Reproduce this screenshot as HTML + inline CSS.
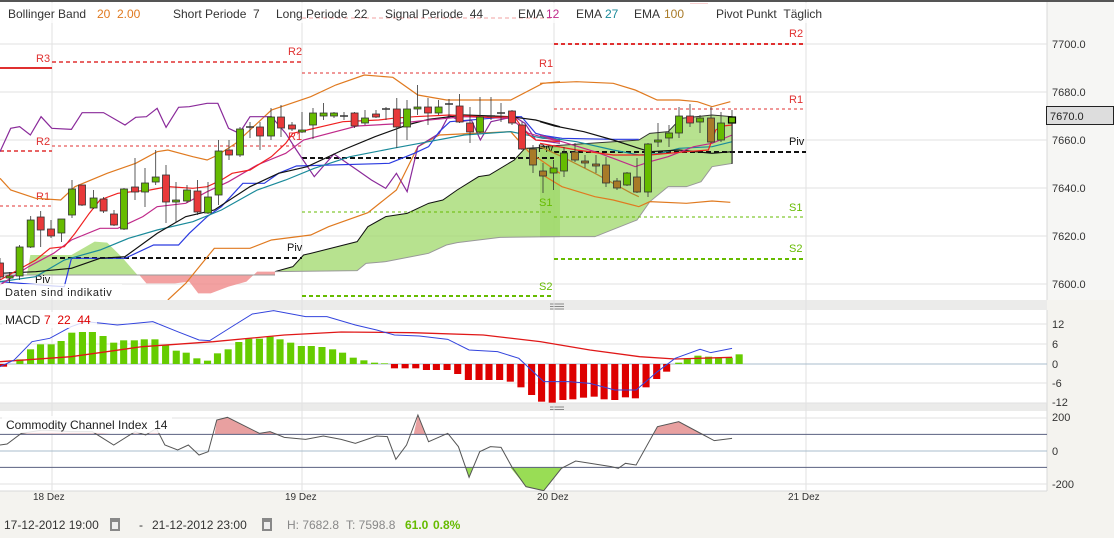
<!DOCTYPE html>
<html><head><meta charset="utf-8"><style>
html,body{margin:0;padding:0;background:#f4f3ef;}
body{width:1114px;height:538px;overflow:hidden;position:relative;font-family:"Liberation Sans",sans-serif;}
svg{position:absolute;left:0;top:0;}
text{font-family:"Liberation Sans",sans-serif;}
</style></head><body>
<svg width="1114" height="538" viewBox="0 0 1114 538">
<defs>
<clipPath id="mc"><rect x="0" y="3" width="1047" height="297"/></clipPath>
<clipPath id="mac"><rect x="0" y="310" width="1047" height="94"/></clipPath>
<clipPath id="cc"><rect x="0" y="410" width="1047" height="81"/></clipPath>
</defs>
<rect x="0" y="0" width="1114" height="538" fill="#f4f3ef"/>
<rect x="0" y="2" width="1047" height="298" fill="#fff"/>
<rect x="1047" y="2" width="67" height="298" fill="#f6f6f4"/>
<line x1="1047" y1="2" x2="1047" y2="300" stroke="#d8d8d8"/>
<rect x="0" y="0" width="1114" height="2" fill="#555"/>
<rect x="0" y="300" width="1047" height="10" fill="#ebebea"/>
<g stroke="#888" stroke-width="1"><line x1="550" y1="304" x2="564" y2="304"/><line x1="550" y1="306.5" x2="564" y2="306.5"/><line x1="550" y1="309" x2="564" y2="309"/></g>
<rect x="0" y="310" width="1047" height="93" fill="#fff"/>
<rect x="0" y="403" width="1047" height="8" fill="#ebebea"/>
<g stroke="#888" stroke-width="1"><line x1="550" y1="407" x2="564" y2="407"/><line x1="550" y1="409.5" x2="564" y2="409.5"/><line x1="550" y1="412" x2="564" y2="412"/></g>
<rect x="0" y="411" width="1047" height="80" fill="#fff"/>
<line x1="1047" y1="310" x2="1047" y2="491" stroke="#d8d8d8"/>
<line x1="0" y1="491" x2="1047" y2="491" stroke="#d8d8d8"/>

<g stroke="#e2e2e2" stroke-width="1">
<line x1="0" y1="44" x2="1047" y2="44"/><line x1="0" y1="92" x2="1047" y2="92"/><line x1="0" y1="140" x2="1047" y2="140"/><line x1="0" y1="188" x2="1047" y2="188"/><line x1="0" y1="236" x2="1047" y2="236"/><line x1="0" y1="284" x2="1047" y2="284"/>
<line x1="52" y1="2" x2="52" y2="491"/><line x1="302" y1="2" x2="302" y2="491"/><line x1="554" y1="2" x2="554" y2="491"/><line x1="806" y1="2" x2="806" y2="491"/>
</g>

<g clip-path="url(#mc)">
<g transform="scale(0.35714,0.33333)">
<polygon points="75,825 85,765 200,765 265,725 300,728 340,770 385,825" fill="#9fd86a" fill-opacity="0.75"/>
<polygon points="390,825 410,850 490,850 530,845 555,880 590,880 640,860 690,845 720,815 770,815 770,825" fill="#f08a8a" fill-opacity="0.8"/>
<polygon points="770,815 820,800 850,765 870,760 1000,725 1030,680 1080,650 1140,640 1200,610 1240,600 1280,570 1340,530 1370,525 1440,480 1470,445 1568,440 1568,710 1400,712 1280,728 1250,735 1200,760 1080,785 1025,790 1000,812" fill="#9fd86a" fill-opacity="0.75"/>
<polyline points="0,825 770,825" fill="none" stroke="#999" vector-effect="non-scaling-stroke"/>
<polyline points="770,815 820,800 850,765 870,760 1000,725 1030,680 1080,650 1140,640 1200,610 1240,600 1280,570 1340,530 1370,525 1440,480 1470,445 1568,440" fill="none" stroke="#111" vector-effect="non-scaling-stroke"/>
<polyline points="770,815 1000,812 1025,790 1080,785 1200,760 1250,735 1280,728 1400,712 1568,710" fill="none" stroke="#999" vector-effect="non-scaling-stroke"/>
</g>
<g transform="translate(540,0) scale(0.36603,0.33333)">
<polygon points="0,440 270,420 300,400 350,395 385,355 470,345 525,350 525,490 470,500 440,545 400,560 350,560 300,605 265,660 150,710 0,710" fill="#9fd86a" fill-opacity="0.75"/>
<polyline points="0,440 270,420 300,400 350,395 385,355 470,345 525,350 525,490" fill="none" stroke="#333" vector-effect="non-scaling-stroke"/>
<polyline points="0,710 150,710 265,660 300,605 350,560 400,560 440,545 470,500 525,490" fill="none" stroke="#999" vector-effect="non-scaling-stroke"/>
</g>

<line x1="0" y1="68" x2="52" y2="68" stroke="#e03030" stroke-width="2"/>
<line x1="0" y1="151" x2="52" y2="151" stroke="#e03030" stroke-width="1.5" stroke-dasharray="4,3"/>
<line x1="0" y1="206" x2="52" y2="206" stroke="#e03030" stroke-width="1" stroke-dasharray="3,3"/>
<line x1="52" y1="62" x2="302" y2="62" stroke="#e03030" stroke-width="1.5" stroke-dasharray="4,3"/>
<line x1="52" y1="146" x2="302" y2="146" stroke="#e03030" stroke-width="1" stroke-dasharray="3,3"/>
<line x1="52" y1="258" x2="302" y2="258" stroke="#111" stroke-width="2" stroke-dasharray="5,3"/>
<line x1="302" y1="18" x2="554" y2="18" stroke="#e03030" stroke-width="1.5" stroke-dasharray="4,3"/>
<line x1="302" y1="73" x2="554" y2="73" stroke="#e03030" stroke-width="1" stroke-dasharray="3,3"/>
<line x1="302" y1="158" x2="554" y2="158" stroke="#111" stroke-width="2" stroke-dasharray="5,3"/>
<line x1="302" y1="212" x2="554" y2="212" stroke="#66bb00" stroke-width="1" stroke-dasharray="3,3"/>
<line x1="302" y1="296" x2="554" y2="296" stroke="#66bb00" stroke-width="2" stroke-dasharray="4,3"/>
<line x1="554" y1="44" x2="806" y2="44" stroke="#e03030" stroke-width="2" stroke-dasharray="4,3"/>
<line x1="554" y1="109" x2="806" y2="109" stroke="#e03030" stroke-width="1" stroke-dasharray="3,3"/>
<line x1="554" y1="152" x2="806" y2="152" stroke="#111" stroke-width="2" stroke-dasharray="5,3"/>
<line x1="554" y1="217" x2="806" y2="217" stroke="#66bb00" stroke-width="1" stroke-dasharray="3,3"/>
<line x1="554" y1="259" x2="806" y2="259" stroke="#66bb00" stroke-width="2" stroke-dasharray="4,3"/>
<line x1="690" y1="3" x2="708" y2="3" stroke="#e03030" stroke-width="1.5"/>
<g font-size="11" fill="#e03030">
<text x="36" y="62">R3</text><text x="36" y="145">R2</text><text x="36" y="200">R1</text>
<text x="288" y="55">R2</text><text x="288" y="140">R1</text>
<text x="539" y="67">R1</text><text x="789" y="37">R2</text><text x="789" y="103">R1</text>
</g>
<g font-size="11" fill="#66bb00">
<text x="539" y="206">S1</text><text x="539" y="290">S2</text><text x="789" y="211">S1</text><text x="789" y="252">S2</text>
</g>
<g font-size="11" fill="#111">
<text x="35" y="283">Piv</text><text x="287" y="251">Piv</text><text x="538" y="152">Piv</text><text x="789" y="145">Piv</text>
</g>

<g transform="scale(0.35714,0.33333)" fill="none" stroke-width="1.2">
<polyline vector-effect="non-scaling-stroke" stroke="#e07a20" points="0,535 30,570 100,595 170,600 210,560 300,520 380,490 440,455 470,450 540,470 580,480 610,465 660,430 760,330 870,290 940,255 1020,225 1100,232 1170,285 1250,300 1430,300 1520,250 1568,245"/>
<polyline vector-effect="non-scaling-stroke" stroke="#e07a20" points="470,900 520,850 600,745 700,745 760,720 870,705 920,680 1030,638 1110,570 1170,440 1230,405 1430,395 1480,455 1568,520"/>
<polyline vector-effect="non-scaling-stroke" stroke="#8a2a9a" points="0,455 30,385 55,380 85,405 115,350 145,385 200,388 230,338 290,338 350,375 380,352 410,350 440,325 465,382 500,322 530,320 580,310 610,310 640,385 670,400 700,350 760,350 800,400 830,450 880,530 935,462 1000,510 1040,540 1080,565 1110,520 1140,575 1170,440 1200,420 1230,400 1257,345 1290,365 1320,360 1345,420 1375,365 1440,350 1470,370 1500,420 1568,430"/>
<polyline vector-effect="non-scaling-stroke" stroke="#2a3ae0" points="0,845 150,858 180,860 200,775 350,775 430,735 500,735 530,700 580,650 620,620 680,550 740,550 780,520 830,498 1090,490 1160,460 1200,440 1230,395 1260,365 1430,350 1460,350 1500,400 1568,420"/>
<polyline vector-effect="non-scaling-stroke" stroke="#1a8a9a" points="0,845 100,830 180,780 280,750 360,715 440,690 540,665 620,630 720,570 800,540 880,505 980,470 1100,445 1200,425 1300,405 1430,395 1520,415 1568,418"/>
<polyline vector-effect="non-scaling-stroke" stroke="#111" points="0,820 100,815 200,805 280,775 350,770 440,700 520,650 600,630 700,560 780,520 860,500 960,450 1050,410 1140,375 1200,358 1300,345 1430,350 1500,360 1568,380"/>
<polyline vector-effect="non-scaling-stroke" stroke="#c02a8a" points="0,855 80,800 150,760 200,720 280,685 330,685 400,650 440,620 520,610 580,575 640,545 720,495 800,460 850,420 1000,378 1100,372 1200,360 1300,350 1430,355 1480,400 1568,425"/>
<polyline vector-effect="non-scaling-stroke" stroke="#f02020" points="0,840 50,810 100,780 140,745 180,740 210,700 250,640 280,600 330,580 370,575 420,570 470,560 540,565 580,560 620,540 650,520 700,510 760,470 800,430 820,400 860,390 960,365 1060,360 1100,355 1160,350 1260,345 1380,352 1440,350 1470,395 1500,420 1568,425"/>
</g>
<g transform="translate(540,0) scale(0.36603,0.33333)" fill="none" stroke-width="1.2">
<polyline vector-effect="non-scaling-stroke" stroke="#e07a20" points="0,250 100,245 200,250 260,270 320,300 380,300 430,305 470,320 520,305"/>
<polyline vector-effect="non-scaling-stroke" stroke="#e07a20" points="0,520 60,560 150,590 200,600 270,620 300,605 400,610 470,603 520,607"/>
<polyline vector-effect="non-scaling-stroke" stroke="#b8862a" points="0,440 60,470 150,520 250,580 270,590"/>
<polyline vector-effect="non-scaling-stroke" stroke="#2a3ae0" points="0,405 60,415 200,418 270,418"/>
<polyline vector-effect="non-scaling-stroke" stroke="#1a8a9a" points="0,410 100,425 200,450 270,465 330,460 380,445 470,440 525,425"/>
<polyline vector-effect="non-scaling-stroke" stroke="#111" points="0,365 40,378 120,395 200,420 270,445 300,455 380,450 470,460 525,455"/>
<polyline vector-effect="non-scaling-stroke" stroke="#c02a8a" points="0,405 60,425 150,455 200,475 260,500 300,485 350,470 420,440 470,430 525,405"/>
<polyline vector-effect="non-scaling-stroke" stroke="#f02020" points="0,430 100,450 200,465 300,465 400,455 460,450 480,390 500,378 525,375"/>
</g>

<g stroke="#333" stroke-width="0.8">
<line x1="0" y1="258" x2="0" y2="280"/><rect x="-3.5" y="263" width="7" height="14" fill="#e8393a"/>
<line x1="9.6" y1="272" x2="9.6" y2="283"/><rect x="6.1" y="276" width="7" height="2" fill="#66bb00"/>
<line x1="19.6" y1="245" x2="19.6" y2="280"/><rect x="16.1" y="247" width="7" height="29" fill="#66bb00"/>
<line x1="30.7" y1="216" x2="30.7" y2="248"/><rect x="27.2" y="220" width="7" height="27" fill="#66bb00"/>
<line x1="40.7" y1="211" x2="40.7" y2="247"/><rect x="37.2" y="217" width="7" height="13" fill="#e8393a"/>
<line x1="51" y1="220" x2="51" y2="238"/><rect x="47.5" y="229" width="7" height="7" fill="#e8393a"/>
<line x1="61.4" y1="219" x2="61.4" y2="242"/><rect x="57.9" y="219" width="7" height="14" fill="#66bb00"/>
<line x1="72" y1="180" x2="72" y2="218"/><rect x="68.5" y="189" width="7" height="26" fill="#66bb00"/>
<line x1="82" y1="185" x2="82" y2="206"/><rect x="78.5" y="185" width="7" height="20" fill="#e8393a"/>
<line x1="93.6" y1="190" x2="93.6" y2="209"/><rect x="90.1" y="198" width="7" height="10" fill="#66bb00"/>
<line x1="103.6" y1="197" x2="103.6" y2="213"/><rect x="100.1" y="199" width="7" height="12" fill="#e8393a"/>
<line x1="114" y1="210" x2="114" y2="226"/><rect x="110.5" y="214" width="7" height="11" fill="#e8393a"/>
<line x1="124" y1="188" x2="124" y2="230"/><rect x="120.5" y="189" width="7" height="40" fill="#66bb00"/>
<line x1="135" y1="158" x2="135" y2="200"/><rect x="131.5" y="187" width="7" height="5" fill="#e8393a"/>
<line x1="145" y1="168" x2="145" y2="207"/><rect x="141.5" y="183" width="7" height="9" fill="#66bb00"/>
<line x1="155.7" y1="150" x2="155.7" y2="185"/><rect x="152.2" y="177" width="7" height="5" fill="#66bb00"/>
<line x1="166" y1="165" x2="166" y2="223"/><rect x="162.5" y="175" width="7" height="27" fill="#e8393a"/>
<line x1="176" y1="182" x2="176" y2="222"/><rect x="172.5" y="200" width="7" height="2" fill="#66bb00"/>
<line x1="187" y1="185" x2="187" y2="203"/><rect x="183.5" y="190" width="7" height="11" fill="#66bb00"/>
<line x1="197.5" y1="180" x2="197.5" y2="215"/><rect x="194" y="191" width="7" height="21" fill="#e8393a"/>
<line x1="208" y1="182" x2="208" y2="214"/><rect x="204.5" y="197" width="7" height="16" fill="#66bb00"/>
<line x1="218.6" y1="140" x2="218.6" y2="205"/><rect x="215.1" y="151" width="7" height="44" fill="#66bb00"/>
<line x1="229" y1="140" x2="229" y2="160"/><rect x="225.5" y="150" width="7" height="5" fill="#e8393a"/>
<line x1="240" y1="127" x2="240" y2="157"/><rect x="236.5" y="129" width="7" height="26" fill="#66bb00"/>
<line x1="250" y1="122" x2="250" y2="138"/><line x1="246" y1="127" x2="254" y2="127" stroke-width="1.5"/>
<line x1="260" y1="122" x2="260" y2="150"/><rect x="256.5" y="127" width="7" height="9" fill="#e8393a"/>
<line x1="271" y1="108" x2="271" y2="140"/><rect x="267.5" y="117" width="7" height="19" fill="#66bb00"/>
<line x1="281" y1="105" x2="281" y2="137"/><rect x="277.5" y="117" width="7" height="11" fill="#e8393a"/>
<line x1="292" y1="122" x2="292" y2="131"/><rect x="288.5" y="125" width="7" height="4" fill="#e8393a"/>
<line x1="302" y1="112" x2="302" y2="133"/><rect x="298.5" y="130" width="7" height="2" fill="#66bb00"/>
<line x1="313" y1="108" x2="313" y2="139"/><rect x="309.5" y="113" width="7" height="12" fill="#66bb00"/>
<line x1="323.6" y1="103" x2="323.6" y2="120"/><rect x="320.1" y="113" width="7" height="3" fill="#66bb00"/>
<line x1="334" y1="112" x2="334" y2="118"/><rect x="330.5" y="113" width="7" height="3" fill="#66bb00"/>
<line x1="344" y1="112" x2="344" y2="120"/><line x1="340" y1="116" x2="348" y2="116" stroke-width="1.5"/>
<line x1="354.6" y1="112" x2="354.6" y2="128"/><rect x="351.1" y="113" width="7" height="13" fill="#e8393a"/>
<line x1="365" y1="110" x2="365" y2="125"/><rect x="361.5" y="118" width="7" height="5" fill="#66bb00"/>
<line x1="376" y1="110" x2="376" y2="118"/><rect x="372.5" y="114" width="7" height="3" fill="#e8393a"/>
<line x1="386" y1="107" x2="386" y2="120"/><line x1="382" y1="109" x2="390" y2="109" stroke-width="1.5"/>
<line x1="396.8" y1="98" x2="396.8" y2="148"/><rect x="393.3" y="109" width="7" height="18" fill="#e8393a"/>
<line x1="407" y1="100" x2="407" y2="140"/><rect x="403.5" y="109" width="7" height="18" fill="#66bb00"/>
<line x1="417.5" y1="85" x2="417.5" y2="115"/><rect x="414" y="107" width="7" height="2" fill="#66bb00"/>
<line x1="428" y1="98" x2="428" y2="125"/><rect x="424.5" y="107" width="7" height="6" fill="#e8393a"/>
<line x1="438.6" y1="100" x2="438.6" y2="115"/><rect x="435.1" y="107" width="7" height="6" fill="#66bb00"/>
<line x1="449" y1="99" x2="449" y2="118"/><line x1="445" y1="104" x2="453" y2="104" stroke-width="1.5"/>
<line x1="459.6" y1="94" x2="459.6" y2="123"/><rect x="456.1" y="106" width="7" height="16" fill="#e8393a"/>
<line x1="470" y1="107" x2="470" y2="143"/><rect x="466.5" y="123" width="7" height="9" fill="#e8393a"/>
<line x1="480" y1="97" x2="480" y2="133"/><rect x="476.5" y="117" width="7" height="15" fill="#66bb00"/>
<line x1="491" y1="97" x2="491" y2="120"/><line x1="487" y1="116" x2="495" y2="116" stroke-width="1.5"/>
<line x1="501" y1="103" x2="501" y2="122"/><line x1="497" y1="113" x2="505" y2="113" stroke-width="1.5"/>
<line x1="512" y1="110" x2="512" y2="125"/><rect x="508.5" y="111" width="7" height="12" fill="#e8393a"/>
<line x1="522" y1="122" x2="522" y2="150"/><rect x="518.5" y="125" width="7" height="24" fill="#e8393a"/>
<line x1="533" y1="145" x2="533" y2="173"/><rect x="529.5" y="149" width="7" height="16" fill="#a87a28"/>
<line x1="543" y1="163" x2="543" y2="193"/><rect x="539.5" y="171" width="7" height="5" fill="#a87a28"/>
<line x1="553.6" y1="160" x2="553.6" y2="190"/><rect x="550.1" y="168" width="7" height="5" fill="#66bb00"/>
<line x1="564" y1="147" x2="564" y2="177"/><rect x="560.5" y="153" width="7" height="18" fill="#66bb00"/>
<line x1="575" y1="143" x2="575" y2="162"/><rect x="571.5" y="152" width="7" height="8" fill="#a87a28"/>
<line x1="585" y1="155" x2="585" y2="168"/><rect x="581.5" y="161" width="7" height="2" fill="#a87a28"/>
<line x1="596" y1="155" x2="596" y2="173"/><rect x="592.5" y="164" width="7" height="2" fill="#a87a28"/>
<line x1="606" y1="157" x2="606" y2="187"/><rect x="602.5" y="165" width="7" height="18" fill="#a87a28"/>
<line x1="617" y1="178" x2="617" y2="190"/><rect x="613.5" y="181" width="7" height="7" fill="#a87a28"/>
<line x1="627" y1="172" x2="627" y2="186"/><rect x="623.5" y="173" width="7" height="12" fill="#66bb00"/>
<line x1="637" y1="158" x2="637" y2="193"/><rect x="633.5" y="177" width="7" height="15" fill="#a87a28"/>
<line x1="648" y1="143" x2="648" y2="197"/><rect x="644.5" y="144" width="7" height="48" fill="#66bb00"/>
<line x1="658" y1="123" x2="658" y2="147"/><rect x="654.5" y="140" width="7" height="2" fill="#66bb00"/>
<line x1="669" y1="125" x2="669" y2="147"/><rect x="665.5" y="133" width="7" height="5" fill="#66bb00"/>
<line x1="679" y1="107" x2="679" y2="138"/><rect x="675.5" y="116" width="7" height="17" fill="#66bb00"/>
<line x1="690" y1="104" x2="690" y2="127"/><rect x="686.5" y="116" width="7" height="7" fill="#e8393a"/>
<line x1="700" y1="115" x2="700" y2="133"/><rect x="696.5" y="118" width="7" height="4" fill="#66bb00"/>
<line x1="711" y1="107" x2="711" y2="143"/><rect x="707.5" y="118" width="7" height="24" fill="#a87a28"/>
<line x1="721" y1="112" x2="721" y2="142"/><rect x="717.5" y="123" width="7" height="17" fill="#66bb00"/>
<line x1="732" y1="110" x2="732" y2="164"/><rect x="728.5" y="117" width="7" height="6" fill="#66bb00" stroke="#000" stroke-width="1.2"/>
</g>
<line x1="732" y1="123" x2="732" y2="164" stroke="#222" stroke-width="1"/>
</g>

<rect x="0" y="3" width="830" height="20" fill="#fff" fill-opacity="0.7"/>
<g font-size="12" fill="#333">
<text x="8" y="18">Bollinger Band</text><text x="97" y="18" fill="#e07a20">20</text><text x="117" y="18" fill="#e07a20">2.00</text>
<text x="173" y="18">Short Periode&#160;&#160;7</text>
<text x="276" y="18">Long Periode&#160;&#160;22</text>
<text x="385" y="18">Signal Periode&#160;&#160;44</text>
<text x="518" y="18">EMA</text><text x="546" y="18" fill="#c02a8a">12</text>
<text x="576" y="18">EMA</text><text x="605" y="18" fill="#1a8a9a">27</text>
<text x="634" y="18">EMA</text><text x="664" y="18" fill="#a87a28">100</text>
<text x="716" y="18">Pivot Punkt&#160;&#160;Täglich</text>
</g>
<rect x="0" y="284" width="122" height="14" fill="#fff" fill-opacity="0.8"/>
<text x="5" y="296" font-size="11" fill="#222" letter-spacing="0.6">Daten sind indikativ</text>

<g font-size="11" fill="#333">
<text x="1052" y="48">7700.0</text><text x="1052" y="96">7680.0</text><text x="1052" y="144">7660.0</text><text x="1052" y="192">7640.0</text><text x="1052" y="240">7620.0</text><text x="1052" y="288">7600.0</text>
</g>
<rect x="1046.5" y="106.5" width="67" height="18" fill="#ddd" stroke="#222"/>
<text x="1050" y="120" font-size="11" fill="#222">7670.0</text>

<g stroke="#e2e2e2"><line x1="0" y1="324" x2="1047" y2="324"/><line x1="0" y1="344" x2="1047" y2="344"/><line x1="0" y1="383" x2="1047" y2="383"/><line x1="0" y1="403" x2="1047" y2="403"/></g>
<line x1="0" y1="364" x2="1047" y2="364" stroke="#a8bccc"/>
<g clip-path="url(#mac)">
<g transform="translate(0,300) scale(0.71073,0.33333)">
<g fill="#66cc00">
<rect x="23" y="178" width="10" height="14"/><rect x="38" y="148" width="10" height="44"/><rect x="52" y="133" width="10" height="59"/><rect x="67" y="133" width="10" height="59"/><rect x="81" y="123" width="10" height="69"/><rect x="96" y="98" width="10" height="94"/><rect x="111" y="96" width="10" height="96"/><rect x="125" y="96" width="10" height="96"/><rect x="140" y="108" width="10" height="84"/><rect x="155" y="128" width="10" height="64"/><rect x="169" y="121" width="10" height="71"/><rect x="184" y="121" width="10" height="71"/><rect x="198" y="118" width="10" height="74"/><rect x="213" y="118" width="10" height="74"/><rect x="228" y="135" width="10" height="57"/><rect x="243" y="152" width="10" height="40"/><rect x="257" y="158" width="10" height="34"/><rect x="272" y="175" width="10" height="17"/><rect x="287" y="182" width="10" height="10"/><rect x="301" y="160" width="10" height="32"/><rect x="316" y="148" width="10" height="44"/><rect x="331" y="126" width="10" height="66"/><rect x="345" y="116" width="10" height="76"/><rect x="360" y="116" width="10" height="76"/><rect x="375" y="110" width="10" height="82"/><rect x="389" y="118" width="10" height="74"/><rect x="404" y="128" width="10" height="64"/><rect x="419" y="138" width="10" height="54"/><rect x="433" y="138" width="10" height="54"/><rect x="448" y="141" width="10" height="51"/><rect x="463" y="148" width="10" height="44"/><rect x="477" y="158" width="10" height="34"/><rect x="492" y="173" width="10" height="19"/><rect x="507" y="181" width="10" height="11"/><rect x="522" y="188" width="10" height="4"/><rect x="536" y="190" width="10" height="2"/>
<rect x="950" y="188" width="10" height="4"/><rect x="962" y="175" width="10" height="17"/><rect x="977" y="167" width="10" height="25"/><rect x="992" y="170" width="10" height="22"/><rect x="1006" y="172" width="10" height="20"/><rect x="1021" y="173" width="10" height="19"/><rect x="1035" y="163" width="10" height="29"/>
</g>
<g fill="#dd0000">
<rect x="0" y="192" width="10" height="8"/><rect x="550" y="192" width="10" height="13"/><rect x="565" y="192" width="10" height="13"/><rect x="580" y="192" width="10" height="13"/><rect x="595" y="192" width="10" height="18"/><rect x="609" y="192" width="10" height="18"/><rect x="624" y="192" width="10" height="18"/><rect x="639" y="192" width="10" height="30"/><rect x="654" y="192" width="10" height="48"/><rect x="669" y="192" width="10" height="48"/><rect x="683" y="192" width="10" height="48"/><rect x="698" y="192" width="10" height="48"/><rect x="713" y="192" width="10" height="53"/><rect x="728" y="192" width="10" height="70"/><rect x="743" y="192" width="10" height="93"/><rect x="757" y="192" width="10" height="113"/><rect x="772" y="192" width="10" height="116"/><rect x="787" y="192" width="10" height="108"/><rect x="801" y="192" width="10" height="106"/><rect x="816" y="192" width="10" height="101"/><rect x="831" y="192" width="10" height="98"/><rect x="845" y="192" width="10" height="106"/><rect x="860" y="192" width="10" height="108"/><rect x="875" y="192" width="10" height="100"/><rect x="889" y="192" width="10" height="103"/><rect x="904" y="192" width="10" height="70"/><rect x="919" y="192" width="10" height="45"/><rect x="933" y="192" width="10" height="23"/>
</g>
<polyline vector-effect="non-scaling-stroke" fill="none" stroke="#e01818" stroke-width="1.3" points="0,185 100,170 200,140 300,125 400,105 480,96 580,98 680,105 760,125 830,150 900,170 950,177 1030,172"/>
<polyline vector-effect="non-scaling-stroke" fill="none" stroke="#3344dd" stroke-width="1" points="0,200 20,180 45,125 70,115 100,80 120,65 145,70 165,75 215,65 250,95 280,120 295,122 330,75 355,42 385,32 430,50 460,50 500,75 530,90 555,105 590,108 630,118 660,150 700,155 730,175 765,245 800,245 830,250 865,270 895,270 925,215 950,175 985,148 1000,158 1030,145"/>
</g>
</g>
<rect x="2" y="312" width="95" height="16" fill="#fff" fill-opacity="0.8"/>
<text x="5" y="324" font-size="12" fill="#222">MACD</text><text x="44" y="324" font-size="12" fill="#dd0000">7&#160;&#160;22&#160;&#160;44</text>
<g font-size="11" fill="#333"><text x="1052" y="328">12</text><text x="1052" y="348">6</text><text x="1052" y="368">0</text><text x="1052" y="387">-6</text><text x="1052" y="406">-12</text></g>

<line x1="0" y1="418" x2="1047" y2="418" stroke="#e2e2e2"/>
<line x1="0" y1="484" x2="1047" y2="484" stroke="#e2e2e2"/>
<g clip-path="url(#cc)">
<g transform="translate(0,300) scale(0.71073,0.33333)">
<polygon points="30,403 30,400 60,390 100,395 130,395 160,403" fill="#f4c8c8" opacity="0.7"/>
<polygon points="185,403 190,395 205,403 220,385 226,403" fill="#f4c8c8" opacity="0.7"/>
<polygon points="302,403 305,360 320,352 365,400 380,395 392,403" fill="#e8a0a0"/>
<polygon points="582,403 588,345 598,403" fill="#e8a0a0"/>
<polygon points="622,403 630,400 633,403" fill="#e8a0a0"/>
<polygon points="920,403 925,380 955,365 990,403" fill="#e8a0a0"/>
<polygon points="655,502 660,532 665,502" fill="#99dd55"/>
<polygon points="718,502 740,560 765,572 790,505 791,502" fill="#99dd55"/>
<polygon points="860,502 870,505 872,502" fill="#99dd55"/>
<polyline vector-effect="non-scaling-stroke" fill="none" stroke="#5a6080" points="0,403 1474,403"/>
<polyline vector-effect="non-scaling-stroke" fill="none" stroke="#a8bccc" points="0,453 1474,453"/>
<polyline vector-effect="non-scaling-stroke" fill="none" stroke="#5a6080" points="0,502 1474,502"/>
<polyline vector-effect="non-scaling-stroke" fill="none" stroke="#555" stroke-width="1" points="0,435 10,432 30,400 60,390 100,395 130,395 160,435 190,395 205,405 220,385 232,435 250,450 265,435 280,465 293,455 305,360 320,352 365,400 380,395 400,412 430,418 455,408 480,418 500,430 530,408 545,410 557,478 572,435 588,345 603,425 630,400 645,440 660,532 675,455 690,440 705,442 720,500 740,560 765,572 790,505 810,483 860,500 870,505 880,490 895,495 925,380 955,365 990,405 1005,422 1030,415"/>
</g>
</g>
<rect x="2" y="416" width="170" height="17" fill="#fff" fill-opacity="0.85"/>
<text x="6" y="429" font-size="12" fill="#222">Commodity Channel Index&#160;&#160;14</text>
<g font-size="11" fill="#333"><text x="1052" y="421">200</text><text x="1052" y="455">0</text><text x="1052" y="488">-200</text></g>

<g font-size="10" fill="#333"><text x="33" y="500">18 Dez</text><text x="285" y="500">19 Dez</text><text x="537" y="500">20 Dez</text><text x="788" y="500">21 Dez</text></g>

<g font-size="12">
<text x="4" y="529" fill="#333">17-12-2012 19:00</text>
<rect x="110" y="518" width="10" height="13" fill="#888"/><rect x="112" y="522" width="6" height="7" fill="#eee"/>
<text x="139" y="529" fill="#333">-</text>
<text x="152" y="529" fill="#333">21-12-2012 23:00</text>
<rect x="262" y="518" width="10" height="13" fill="#888"/><rect x="264" y="522" width="6" height="7" fill="#eee"/>
<text x="287" y="529" fill="#888">H: 7682.8</text>
<text x="346" y="529" fill="#888">T: 7598.8</text>
<text x="405" y="529" fill="#66bb00" font-weight="bold">61.0</text>
<text x="433" y="529" fill="#66bb00" font-weight="bold">0.8%</text>
</g>
</svg>
</body></html>
